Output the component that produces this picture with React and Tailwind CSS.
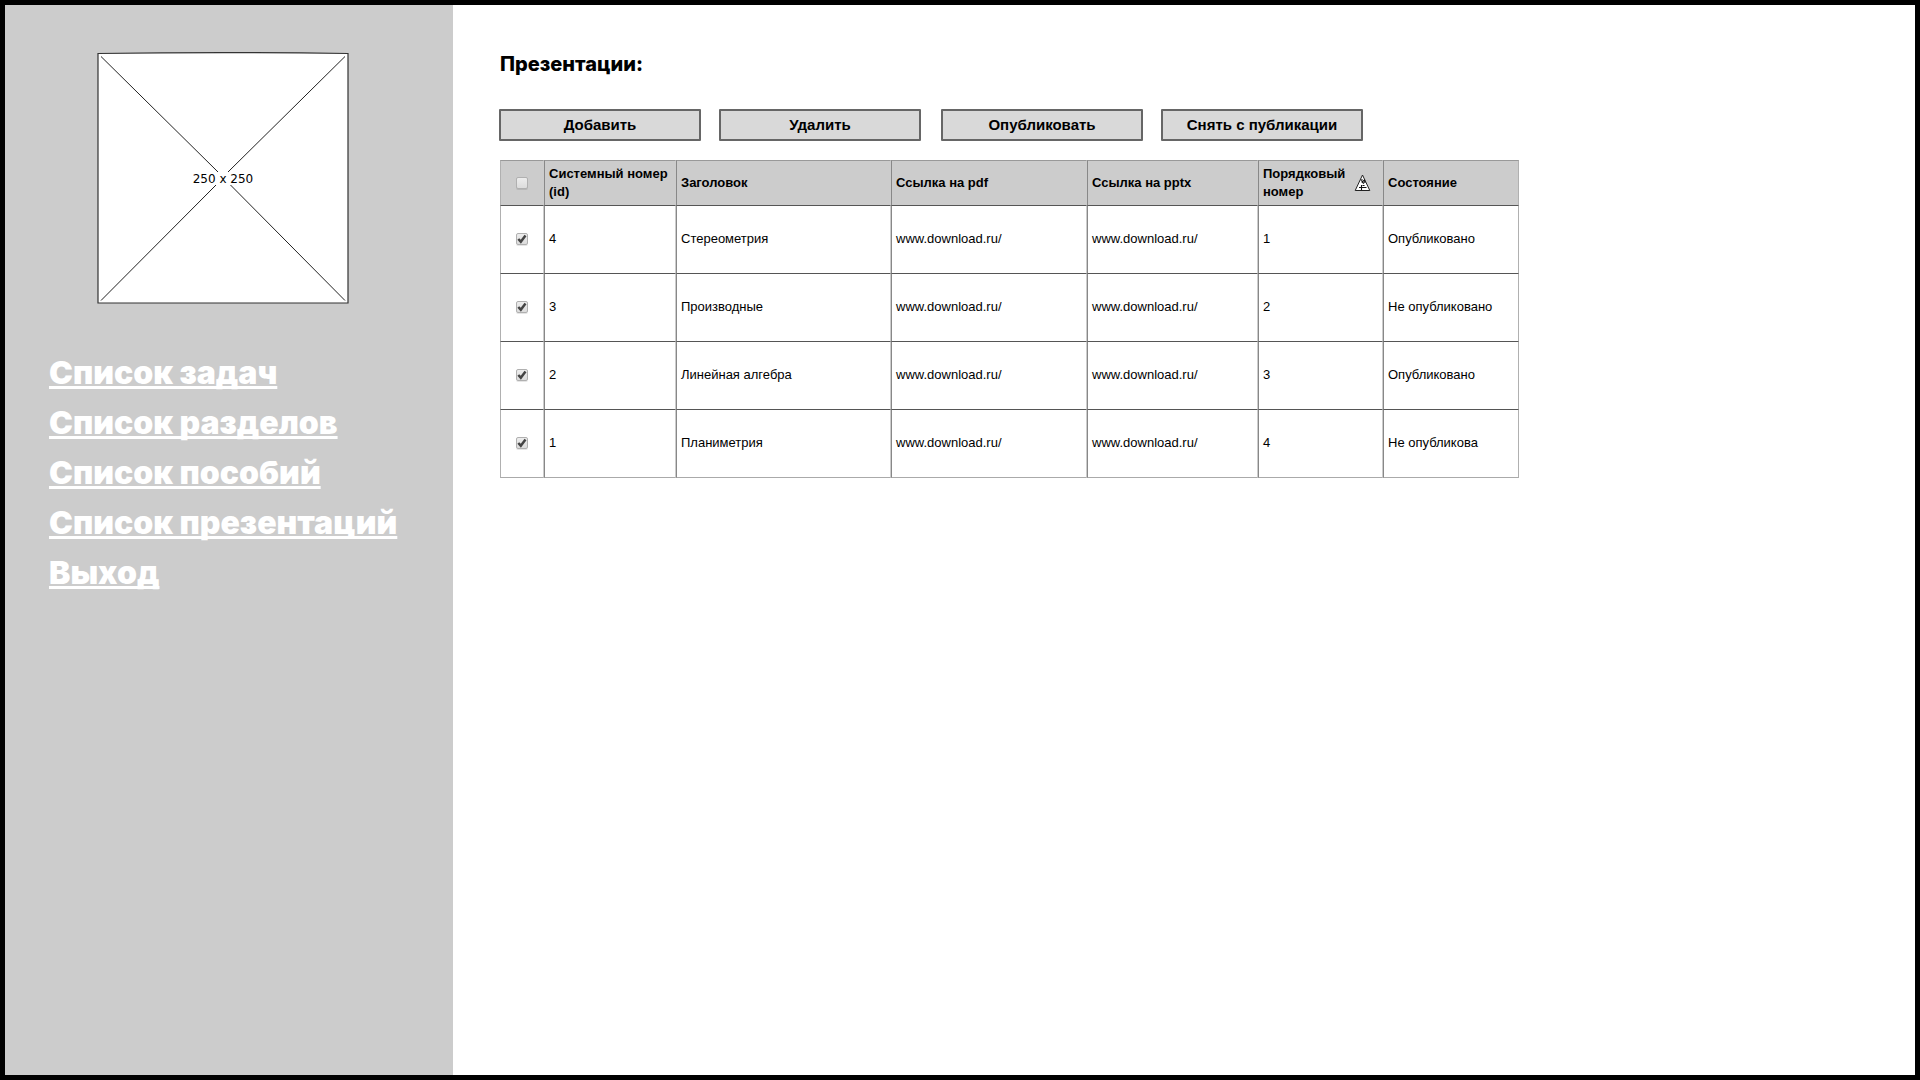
import React, { useState } from "react";

const navLinks = [
  "Список задач",
  "Список разделов",
  "Список пособий",
  "Список презентаций",
  "Выход",
];

const rows = [
  { id: 4, title: "Стереометрия", order: 1, state: "Опубликовано" },
  { id: 3, title: "Производные", order: 2, state: "Не опубликовано" },
  { id: 2, title: "Линейная алгебра", order: 3, state: "Опубликовано" },
  { id: 1, title: "Планиметрия", order: 4, state: "Не опубликова" },
];

const URL_TEXT = "www.download.ru/";

function Placeholder() {
  return (
    <svg viewBox="0 0 252 252" className="block size-[252px]" role="img" aria-label="250 x 250">
      <path d="M1 1.5 Q126 -0.3 251 1.5 V251 H1 Z" fill="#fff" stroke="#333" strokeWidth="1.2" />
      <path
        d="M4 4.500 L121 120 M248 4.500 L131 120 M4 248.500 L119 133 M248 248.500 L133.500 133"
        stroke="#222"
        strokeWidth="1"
        fill="none"
      />
      <text x="126" y="131" textAnchor="middle" fontSize="12" fontFamily="DejaVu Sans, sans-serif" fill="#000">
        250 x 250
      </text>
    </svg>
  );
}

function Checkbox({ label, defaultChecked = false }) {
  const [checked, setChecked] = useState(defaultChecked);
  return (
    <span className="relative mx-auto block size-3">
      <input
        type="checkbox"
        aria-label={label}
        checked={checked}
        onChange={(e) => setChecked(e.target.checked)}
        className="block size-3 appearance-none rounded-xs border border-[#b0b0b0] bg-linear-to-b from-[#ededed] to-[#dcdcdc] shadow-[0_1px_0_rgba(0,0,0,0.1)]"
      />
      {checked && (
        <svg viewBox="0 0 12 12" className="pointer-events-none absolute inset-0 size-3" aria-hidden="true">
          <path d="M2.300 6 L4.800 8.700 L9.500 2.600" fill="none" stroke="#444" strokeWidth="2.500" />
        </svg>
      )}
    </span>
  );
}

function SortIcon() {
  return (
    <svg viewBox="0 0 17 18" className="h-[18px] w-[17px] shrink-0" aria-hidden="true">
      <path d="M8.500 1 L15.800 16.500 H1.200 Z" fill="#fff" stroke="#222" strokeWidth="1" />
      <path d="M6.800 6.500 L8.500 5.500 M8 8 L10.500 6 L11 9 M7.500 7.500 L10 9.500" stroke="#111" strokeWidth="1.200" fill="none" />
      <path d="M5 13.500 H12.500 M7.500 11 V16 M8.500 11.500 H10.500" stroke="#111" strokeWidth="1.100" fill="none" />
    </svg>
  );
}

function ActionButton({ children }) {
  return (
    <button
      type="button"
      className="h-8 w-[202px] rounded-[1px] border-2 border-[#666] bg-[#d9d9d9] text-[15px] leading-6 font-bold"
    >
      {children}
    </button>
  );
}

const edges =
  "border-x border-b border-l-[#888] border-r-[#ccc] px-1 first:border-l-[#b0b0b0] last:border-r-[#b0b0b0]";
const head = `${edges} border-t border-t-[#999] border-b-[#555] text-left font-bold`;
const cell = `${edges} border-b-[#555] pb-0.5 group-last:border-b-[#aaa]`;

export default function App() {
  return (
    <div className="flex min-h-screen border-5 border-black bg-white font-['Liberation_Sans',Arial,sans-serif] text-black">
      <aside className="w-[448px] shrink-0 bg-[#ccc]">
        <div className="flex justify-center pt-[47px] pr-3">
          <Placeholder />
        </div>
        <nav className="mt-11 flex flex-col items-start pl-11 font-['Inter',sans-serif] text-[32px] leading-[50px] font-black text-white">
          {navLinks.map((label) => (
            <a
              key={label}
              href="#"
              className="underline decoration-3 underline-offset-2 [text-decoration-skip-ink:none]"
            >
              {label}
            </a>
          ))}
        </nav>
      </aside>

      <main className="min-w-0 flex-1 pt-11 pr-6 pl-[46px]">
        <h1 className="pl-px font-['Inter',sans-serif] text-xl leading-[30px] font-extrabold">Презентации:</h1>
        <div className="mt-[30px] flex flex-wrap gap-x-5">
          <div className="flex gap-[18px]">
            <ActionButton>Добавить</ActionButton>
            <ActionButton>Удалить</ActionButton>
          </div>
          <div className="flex gap-[18px]">
            <ActionButton>Опубликовать</ActionButton>
            <ActionButton>Снять с публикации</ActionButton>
          </div>
        </div>

        <table className="mt-[19px] ml-px w-full max-w-[1019px] table-fixed border-separate border-spacing-0 text-[13px] leading-[18px]">
          <colgroup>
            <col className="w-11" />
            <col className="w-[132px]" />
            <col className="w-[215px]" />
            <col className="w-[196px]" />
            <col className="w-[171px]" />
            <col className="w-[125px]" />
            <col className="w-[136px]" />
          </colgroup>
          <thead>
            <tr className="h-[46px] bg-[#ccc]">
              <th className={head}><Checkbox label="Выбрать все" /></th>
              <th className={head}>Системный номер (id)</th>
              <th className={head}>Заголовок</th>
              <th className={head}>Ссылка на pdf</th>
              <th className={head}>Ссылка на pptx</th>
              <th className={head}>
                <span className="flex items-center justify-between pr-[7px]">
                  <span>Порядковый<br />номер</span>
                  <SortIcon />
                </span>
              </th>
              <th className={head}>Состояние</th>
            </tr>
          </thead>
          <tbody>
            {rows.map((row) => (
              <tr key={row.id} className="group h-[68px]">
                <td className={cell}><Checkbox label={row.title} defaultChecked /></td>
                <td className={cell}>{row.id}</td>
                <td className={cell}>{row.title}</td>
                <td className={cell}>{URL_TEXT}</td>
                <td className={cell}>{URL_TEXT}</td>
                <td className={cell}>{row.order}</td>
                <td className={cell}>{row.state}</td>
              </tr>
            ))}
          </tbody>
        </table>
      </main>
    </div>
  );
}
